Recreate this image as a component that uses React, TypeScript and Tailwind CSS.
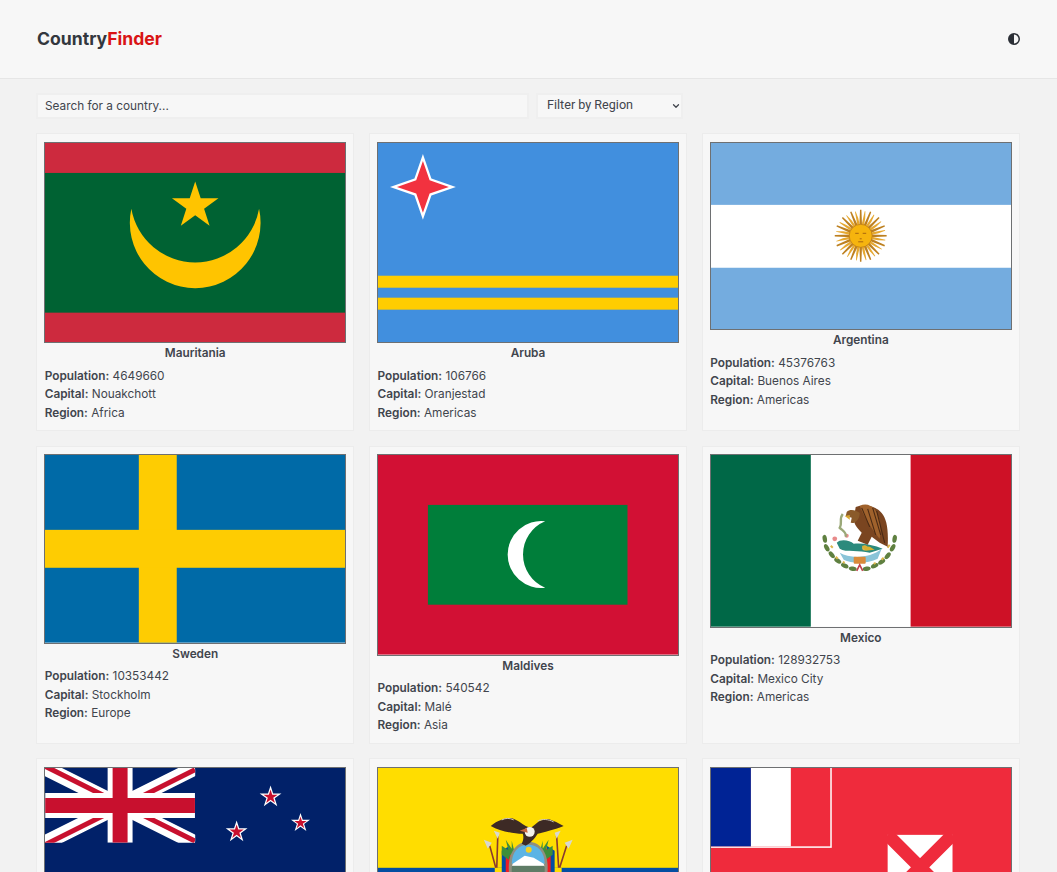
import { FaCircleHalfStroke } from "react-icons/fa6";
import { ChevronDown } from "lucide-react";

function starPoints(cx: number, cy: number, r: number, inner = r * 0.382, n = 5) {
  const pts: string[] = [];
  for (let i = 0; i < n * 2; i++) {
    const a = -Math.PI / 2 + (i * Math.PI) / n;
    const d = i % 2 === 0 ? r : inner;
    pts.push(`${(cx + d * Math.cos(a)).toFixed(2)},${(cy + d * Math.sin(a)).toFixed(2)}`);
  }
  return pts.join(" ");
}

function Mauritania() {
  return (
    <svg viewBox="0 0 301 200" className="block w-full">
      <rect width="301" height="200" fill="#cd2a3e" />
      <rect y="30" width="301" height="140" fill="#006233" />
      <polygon points={starPoints(150.5, 63, 24.5)} fill="#ffc400" />
      <path d="M86.5 66A65.5 65.5 0 1 0 214.5 66A65 65 0 0 1 86.5 66Z" fill="#ffc400" />
    </svg>
  );
}

function Aruba() {
  return (
    <svg viewBox="0 0 301 200" className="block w-full">
      <rect width="301" height="200" fill="#418fde" />
      <rect y="133" width="301" height="12" fill="#ffcd00" />
      <rect y="155" width="301" height="12" fill="#ffcd00" />
      <polygon points={starPoints(45, 44, 33, 12, 4)} fill="#fff" />
      <polygon points={starPoints(45, 44, 26, 9.5, 4)} fill="#f2323f" />
    </svg>
  );
}

function Argentina() {
  const rays = Array.from({ length: 32 }, (_, i) => (i * 360) / 32);
  return (
    <svg viewBox="0 0 301 187" className="block w-full">
      <rect width="301" height="187" fill="#74acdf" />
      <rect y="62" width="301" height="63" fill="#fff" />
      <g transform="translate(150 93)">
        {rays.map((a, i) => (
          <polygon
            key={a}
            points={i % 2 === 0 ? "-1.4,-9 1.4,-9 0.7,-26 -0.7,-26" : "-1.3,-9 1.3,-9 1,-18 -0.2,-25 -0.9,-25"}
            fill={i % 2 === 0 ? "#bd8020" : "#e6a830"}
            transform={`rotate(${a})`}
          />
        ))}
        <circle r="11.5" fill="#f6b40e" stroke="#b9791a" strokeWidth="0.7" />
        <path d="M-5.5 -2.5h3.5M2 -2.5h3.5M-1 3h2M-2.5 6h5" stroke="#a8660f" strokeWidth="1" />
      </g>
    </svg>
  );
}

function Sweden() {
  return (
    <svg viewBox="0 0 301 188" className="block w-full">
      <rect width="301" height="188" fill="#006aa7" />
      <rect x="94" width="38" height="188" fill="#fecc02" />
      <rect y="75" width="301" height="38" fill="#fecc02" />
    </svg>
  );
}

function Maldives() {
  return (
    <svg viewBox="0 0 301 200" className="block w-full">
      <rect width="301" height="200" fill="#d21034" />
      <rect x="50" y="50" width="200" height="100" fill="#007e3a" />
      <path d="M167.5 66.5A33.5 33.5 0 1 0 167.5 133A36 36 0 0 1 167.5 66.5Z" fill="#fff" />
    </svg>
  );
}

function Leaf({ x, y, r }: { x: number; y: number; r: number }) {
  return <ellipse cx={x} cy={y} rx="4" ry="2.2" fill="#5f8040" transform={`rotate(${r} ${x} ${y})`} />;
}

function Mexico() {
  const leaves = [
    [15, 40, 80], [17, 49, 60], [22, 56, 50], [28, 62, 35], [35, 67, 25], [43, 70, 10],
    [85, 40, 100], [83, 49, 120], [78, 57, 130], [72, 63, 145], [65, 67, 155], [57, 70, 170],
  ];
  return (
    <svg viewBox="0 0 301 172" className="block w-full">
      <rect width="301" height="172" fill="#fff" />
      <rect width="100" height="172" fill="#006847" />
      <rect x="200" width="101" height="172" fill="#ce1126" />
      <g transform="translate(99 44)">
        {leaves.map(([x, y, r]) => (
          <Leaf key={`${x}-${y}`} x={x} y={y} r={r} />
        ))}
        <path d="M21 47l2 2M26 58l2 2M33 63l2 1M80 46l-2 3M74 59l-2 2M66 64l-2 1" stroke="#dcb64a" strokeWidth="2" />
        {/* ribbon and cactus */}
        <path d="M30 54C40 60 60 60 72 50L68 60C58 65 42 65 34 61Z" fill="#8ac4d8" />
        <rect x="44" y="58" width="12" height="7" rx="1" fill="#d98a3a" />
        <path d="M47 72l3-6 3 6" fill="none" stroke="#c0404a" strokeWidth="1.6" />
        <path d="M27 44C30 40 40 41 44 45C52 44 64 46 73 50L60 54C50 51 36 54 30 50Z" fill="#2c8a7c" />
        <circle cx="25" cy="40" r="2.4" fill="#e88a8a" />
        <circle cx="37" cy="37" r="2" fill="#e88a8a" />
        <circle cx="55" cy="49" r="2.6" fill="#dcb64a" />
        {/* snake */}
        <path d="M33 15C29 20 33 24 30 29C33 32 37 33 36 38" fill="none" stroke="#9aa878" strokeWidth="2.4" />
        {/* eagle */}
        <path d="M46 8C55 5 66 7 72 14C77 20 79 30 78 48L70 44L62 38L58 46L48 42L52 34C46 28 44 24 44 20Z" fill="#7a4520" />
        <path d="M50 7C56 4 62 6 66 12C70 18 72 28 70 40C64 32 56 22 50 7Z" fill="#a0622c" />
        <path d="M58 10L66 36M63 9L71 36M67 12L75 44M52 9L60 28" stroke="#4a2a14" strokeWidth="1.1" />
        <path d="M37 13C40 10 46 11 50 14C50 20 46 25 41 24L42 19L36 17Z" fill="#8a5a2a" />
        <path d="M35 17L40 16L40 21Z" fill="#d8a830" />
        <path d="M52 47l8 1 5 3-9 1z" fill="#d8b030" />
      </g>
    </svg>
  );
}

function NewZealand() {
  const stars: [number, number, number, number][] = [
    [226, 29, 11.5, 7.5],
    [192, 64, 11.5, 7.5],
    [256, 55, 10, 6.5],
    [226, 122, 12.5, 8],
  ];
  return (
    <svg viewBox="0 0 301 150" className="block w-full">
      <rect width="301" height="150" fill="#012169" />
      <svg x="0" y="0" width="150.5" height="75" viewBox="0 0 60 30">
        <path d="M0 0L60 30M60 0L0 30" stroke="#fff" strokeWidth="6" />
        <path d="M0 0L30 15M30 15L60 30" stroke="#c8102e" strokeWidth="2" transform="translate(0 -0.7)" />
        <path d="M60 0L30 15M30 15L0 30" stroke="#c8102e" strokeWidth="2" transform="translate(0 0.7)" />
        <path d="M30 0V30M0 15H60" stroke="#fff" strokeWidth="10" />
        <path d="M30 0V30M0 15H60" stroke="#c8102e" strokeWidth="6" />
      </svg>
      {stars.map(([x, y, r, ri]) => (
        <g key={`${x}-${y}`}>
          <polygon points={starPoints(x, y, r)} fill="#fff" />
          <polygon points={starPoints(x, y, ri)} fill="#c8102e" />
        </g>
      ))}
    </svg>
  );
}

function Ecuador() {
  return (
    <svg viewBox="0 0 301 200" className="block w-full">
      <rect width="301" height="200" fill="#ffdd00" />
      <rect y="100" width="301" height="50" fill="#034ea2" />
      <rect y="150" width="301" height="50" fill="#ed1c24" />
      <rect x="117" y="100" width="67" height="60" fill="#ffdd00" />
      {/* flags beside the shield */}
      <path d="M124 83L132 78V140H124Z" fill="#034ea2" />
      <path d="M128 86L133 80V140H128Z" fill="#ed1c24" />
      <path d="M177 83L169 78V140H177Z" fill="#034ea2" />
      <path d="M173 86L168 80V140H173Z" fill="#ed1c24" />
      {/* staffs */}
      <path d="M120 68L119 100M112 78L118 100M179 68L181 100M189 78L182 100" stroke="#8a3a30" strokeWidth="1.6" />
      <path d="M116 63l6 2-2 6zM106 72l8 3-4 6zM183 63l-6 2 2 6zM195 72l-8 3 4 6z" fill="#d8d8d0" />
      {/* palm and laurel */}
      <path d="M124 78l9 6-2 8-7-5zM128 72l8 12-4 4zM134 73l3 12-3 2z" fill="#3e8e3a" />
      <path d="M175 78l-9 6 2 8 7-5zM171 72l-8 12 4 4zM165 73l-3 12 3 2z" fill="#3e8e3a" />
      {/* shield */}
      <path d="M150.5 74C162 74 170 84 170 100C170 118 160 132 150.5 132C141 132 131 118 131 100C131 84 139 74 150.5 74Z" fill="#8f8f80" />
      <path d="M150.5 77C160 77 167 84 167 96H134C134 84 141 77 150.5 77Z" fill="#5bb4e5" />
      <circle cx="151" cy="82" r="3" fill="#f5d020" />
      <path d="M135 96L147 88L156 90L166 96L167 99H134Z" fill="#fff" />
      <rect x="134" y="98" width="33" height="10" fill="#5f7c66" />
      {/* condor */}
      <path d="M113 58C120 52 128 50 133 50C139 51 144 56 148 58L153 60L158 56C162 52 167 51 171 51C176 53 181 55 186 58C176 62 166 64 160 66C157 71 152 76 148 78L144 76C146 72 146 68 145 66C135 66 122 63 113 58Z" fill="#3d2a25" />
      <path d="M124 52C128 50 132 50 136 52M160 53C165 51 170 51 176 54" fill="none" stroke="#cfc9c0" strokeWidth="1" />
      <ellipse cx="152" cy="64" rx="5" ry="5" fill="#f2f0ea" />
      <path d="M142 63L149 60L150 65Z" fill="#c8643c" />
    </svg>
  );
}

function Wallis() {
  return (
    <svg viewBox="0 0 301 200" className="block w-full">
      <rect width="301" height="200" fill="#ef2b3c" />
      <rect width="121" height="80" fill="#fff" />
      <rect width="119.5" height="78.5" fill="#ef2b3c" />
      <rect width="40" height="78.5" fill="#002395" />
      <rect x="40" width="40" height="78.5" fill="#fff" />
      <rect x="177" y="67" width="65" height="65" fill="#fff" />
      <path d="M177 67L242 132M242 67L177 132" stroke="#ef2b3c" strokeWidth="13" />
    </svg>
  );
}

const countries = [
  { name: "Mauritania", population: 4649660, capital: "Nouakchott", region: "Africa", Flag: Mauritania },
  { name: "Aruba", population: 106766, capital: "Oranjestad", region: "Americas", Flag: Aruba },
  { name: "Argentina", population: 45376763, capital: "Buenos Aires", region: "Americas", Flag: Argentina },
  { name: "Sweden", population: 10353442, capital: "Stockholm", region: "Europe", Flag: Sweden },
  { name: "Maldives", population: 540542, capital: "Malé", region: "Asia", Flag: Maldives },
  { name: "Mexico", population: 128932753, capital: "Mexico City", region: "Americas", Flag: Mexico },
  { name: "New Zealand", population: 5084300, capital: "Wellington", region: "Oceania", Flag: NewZealand },
  { name: "Ecuador", population: 17643060, capital: "Quito", region: "Americas", Flag: Ecuador },
  { name: "Wallis and Futuna", population: 11750, capital: "Mata-Utu", region: "Oceania", Flag: Wallis },
];

export default function App() {
  return (
    <div className="h-screen overflow-hidden bg-[#f2f2f2] font-['Inter',sans-serif] text-[11.8px] text-[#41454d]">
      <header className="flex h-[79px] items-center justify-between border-b border-[#e6e6e6] bg-[#f7f7f7] pl-[37px] pr-[37px]">
        <h1 className="text-[17.6px] font-bold text-[#33373e]">
          Country<span className="text-[#d91414]">Finder</span>
        </h1>
        <button className="text-[#2b2f36]">
          <FaCircleHalfStroke size={12} />
        </button>
      </header>
      <main className="pl-9 pr-[37px] pt-[14px]">
        <div className="mb-[14.4px] flex gap-[7px]">
          <input
            placeholder="Search for a country..."
            className="h-[26px] w-[493px] border-2 border-[#efefef] bg-[#f7f7f7] px-[7px] text-[11.8px] placeholder:text-[#41454d] focus:outline-none"
          />
          <div className="relative w-[147px]">
            <select className="h-[26px] w-full appearance-none rounded-none border-2 border-[#efefef] bg-[#f7f7f7] pb-px pl-[9px] font-['Roboto',sans-serif] text-[12.6px] focus:outline-none">
              <option>Filter by Region</option>
            </select>
            <ChevronDown size={10} strokeWidth={3} className="pointer-events-none absolute right-[2px] top-[8px] text-[#41454d]" />
          </div>
        </div>
        <div className="grid grid-cols-3 gap-[14.4px]">
          {countries.map(({ name, population, capital, region, Flag }) => (
            <div key={name} className="border border-[#ececec] bg-[#f7f7f7] px-[7px] pb-[8px] pt-[7.4px]">
              <div className="border border-[#6e7072]">
                <Flag />
              </div>
              <div className="text-center font-semibold leading-[20px]">{name}</div>
              <div className="mt-[3.5px] pl-[0.7px] leading-[18.5px]">
                <p><b className="font-semibold">Population:</b> {population}</p>
                <p><b className="font-semibold">Capital:</b> {capital}</p>
                <p><b className="font-semibold">Region:</b> {region}</p>
              </div>
            </div>
          ))}
        </div>
      </main>
    </div>
  );
}
